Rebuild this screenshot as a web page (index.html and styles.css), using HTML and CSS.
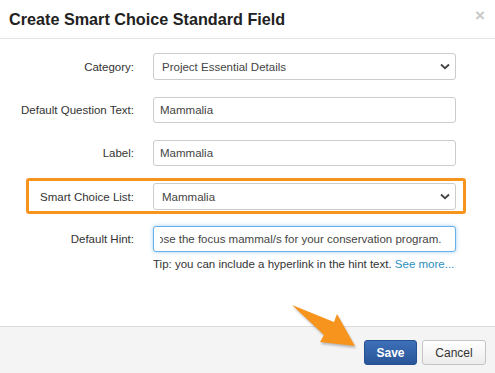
FILE: index.html
```html
<!DOCTYPE html>
<html lang="en">
  <head>
    <meta charset="UTF-8" />
    <meta name="viewport" content="width=device-width, initial-scale=1.0" />
    <title>Create Smart Choice Standard Field</title>
    <link rel="stylesheet" href="styles.css">
  </head>
  <body>
    <div class="modal">
      <div class="modal-header">
        <h1>Create Smart Choice Standard Field</h1>
        <span class="close">&times;</span>
      </div>
      <div class="modal-body">
        <div class="form-row">
          <label for="category">Category:</label>
          <select id="category">
            <option>Project Essential Details</option>
          </select>
        </div>
        <div class="form-row">
          <label for="question">Default Question Text:</label>
          <input type="text" id="question" value="Mammalia" />
        </div>
        <div class="form-row">
          <label for="label">Label:</label>
          <input type="text" id="label" value="Mammalia" />
        </div>
        <div class="form-row highlight">
          <label for="list">Smart Choice List:</label>
          <select id="list">
            <option>Mammalia</option>
          </select>
        </div>
        <div class="form-row">
          <label for="hint">Default Hint:</label>
          <input type="text" id="hint" class="focused" value="ose the focus mammal/s for your conservation program." />
        </div>
        <p class="tip">Tip: you can include a hyperlink in the hint text. <a href="#">See more...</a></p>
      </div>
      <div class="modal-footer">
        <button class="btn btn-primary">Save</button>
        <button class="btn btn-cancel">Cancel</button>
      </div>
      <svg class="arrow" width="80" height="60" viewBox="280 295 80 60">
        <polygon points="292,305 334,322 337,314 355,346 320,342 324,335" fill="#f7941d" />
      </svg>
    </div>
  </body>
</html>
```

FILE: styles.css
```css
body {
  margin: 0;
  font-family: "Liberation Sans", Arial, sans-serif;
  color: #333;
  background-color: #fff;
}
.modal {
  position: relative;
  display: flex;
  flex-direction: column;
  height: 100vh;
}
.modal-header {
  display: flex;
  justify-content: space-between;
  align-items: center;
  height: 38px;
  padding: 0 10px 0 9px;
  border-bottom: 1px solid #e5e5e5;
}
.modal-header h1 {
  margin: 0;
  font-size: 16.2px;
  font-weight: bold;
  color: #222;
}
.close {
  font-size: 17px;
  font-weight: bold;
  color: #c8c8c8;
  margin-top: -6px;
}
.modal-body {
  flex: 1;
  padding: 9px 0 0 26px;
}
.form-row {
  display: flex;
  align-items: center;
  width: 434px;
  padding: 2px 0 1px;
  border: 3px solid transparent;
  border-radius: 3px;
  margin-bottom: 8px;
}
.form-row label {
  display: flex;
  justify-content: flex-end;
  flex-shrink: 0;
  width: 105px;
  margin-right: 19px;
  white-space: nowrap;
  font-size: 11.5px;
  color: #333;
}
.form-row input,
.form-row select {
  box-sizing: border-box;
  width: 303px;
  height: 26px;
  margin: 0;
  padding: 0 6px;
  font-family: "Liberation Sans", Arial, sans-serif;
  font-size: 11.5px;
  color: #444;
  background-color: #fff;
  border: 1px solid #ccc;
  border-radius: 3px;
}
.form-row select {
  height: 27px;
  padding-left: 8px;
  -webkit-appearance: none;
  appearance: none;
  background-image: url("data:image/svg+xml;utf8,<svg xmlns='http://www.w3.org/2000/svg' width='10' height='7' viewBox='0 0 10 7'><path d='M1 1.5 L5 5.2 L9 1.5' fill='none' stroke='%23444' stroke-width='1.8'/></svg>");
  background-repeat: no-repeat;
  background-position: right 5px center;
}
.form-row.highlight {
  border-color: #f7941d;
  margin-bottom: 7px;
}
.form-row input.focused {
  border-color: #66afe9;
  box-shadow: 0 0 4px rgba(102, 175, 233, 0.6);
  text-indent: -3px;
}
.tip {
  margin: -6px 0 0 127px;
  font-size: 11.5px;
  color: #333;
}
.tip a {
  color: #2a8fc1;
  text-decoration: none;
}
.modal-footer {
  display: flex;
  justify-content: flex-end;
  gap: 5px;
  height: 47px;
  box-sizing: border-box;
  padding: 13px 9px 0 0;
  background-color: #f4f4f4;
  border-top: 1px solid #dcdcdc;
}
.btn {
  height: 25px;
  padding: 0 11px;
  font-family: "Liberation Sans", Arial, sans-serif;
  font-size: 12px;
  color: #333;
  background: linear-gradient(#ffffff, #ececec);
  border: 1px solid #c4c4c4;
  border-radius: 3px;
}
.btn-primary {
  width: 53px;
  font-weight: bold;
  color: #fff;
  background: linear-gradient(#3d70b8, #2a5599);
  border-color: #24508f;
}
.btn-cancel {
  width: 64px;
}
.arrow {
  position: absolute;
  left: 280px;
  top: 295px;
  filter: drop-shadow(1px 2px 1px rgba(0, 0, 0, 0.25));
}
```
